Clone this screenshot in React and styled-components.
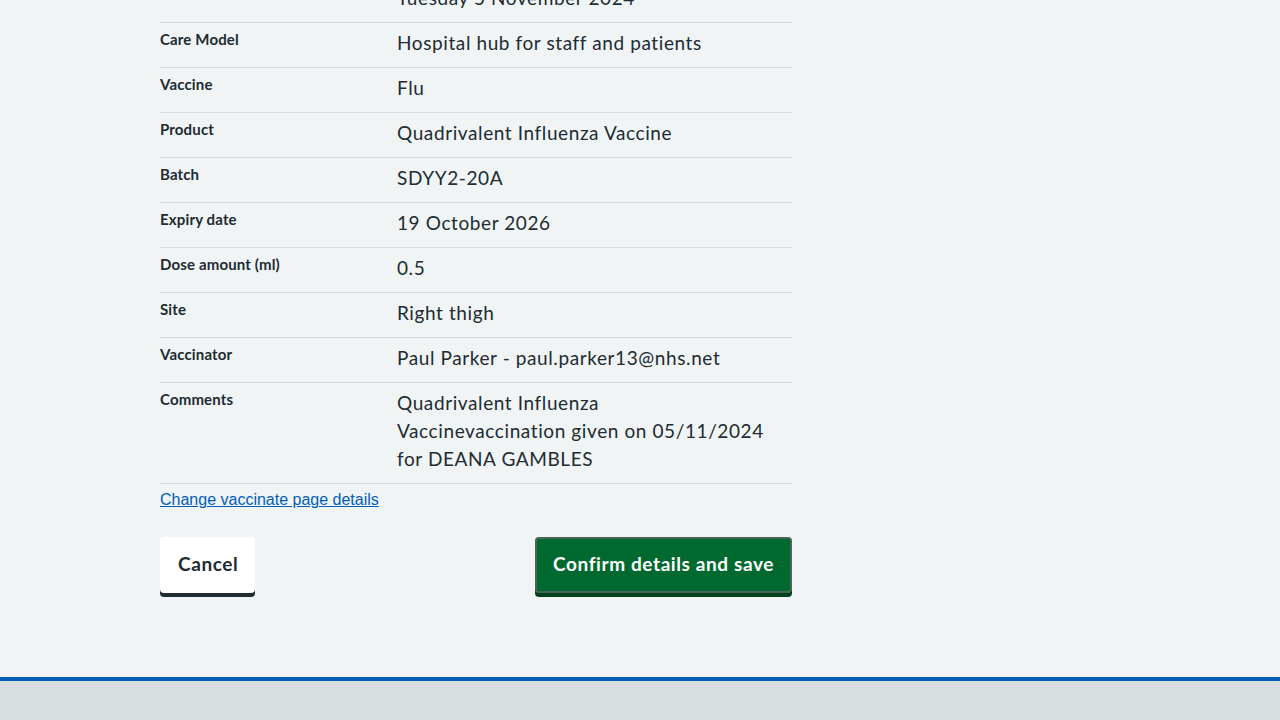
import React from "react";
import styled, { createGlobalStyle } from "styled-components";

const GlobalStyle = createGlobalStyle`
  html, body {
    margin: 0;
    padding: 0;
    background: #f0f4f5;
  }
  body {
    font-family: "Lato", "Noto Sans", sans-serif;
    color: #212b32;
  }
`;

const Page = styled.div`
  overflow: hidden;
`;

const Container = styled.main`
  width: 960px;
  margin: -22px auto 0 auto;
  padding-bottom: 84px;
`;

const Column = styled.div`
  width: 632px;
`;

const SummaryList = styled.dl`
  margin: 0;
`;

const Row = styled.div`
  display: grid;
  grid-template-columns: 237px 1fr;
  border-bottom: 1px solid #d8dde0;
`;

const Key = styled.dt`
  margin: 0;
  padding: 6px 16px 8px 0;
  font-size: 15px;
  line-height: 20px;
  font-weight: 700;
  letter-spacing: 0.15px;
`;

const Value = styled.dd`
  margin: 0;
  padding: 6px 24px 10px 0;
  font-size: 19px;
  line-height: 28px;
  letter-spacing: 0.6px;
`;

const ChangeLink = styled.a`
  display: inline-block;
  margin-top: 7px;
  font-family: "Liberation Sans", Arial, sans-serif;
  font-size: 16px;
  line-height: 18px;
  color: #005eb8;
  text-decoration: underline;
`;

const ButtonRow = styled.div`
  display: flex;
  justify-content: space-between;
  align-items: flex-start;
  margin-top: 28px;
`;

const Button = styled.button`
  font-family: "Lato", "Noto Sans", sans-serif;
  font-size: 19px;
  line-height: 28px;
  font-weight: 700;
  letter-spacing: 0.6px;
  padding: 11px 16px 13px 16px;
  border-radius: 4px;
  cursor: pointer;
  border: 2px solid ${(p) => (p.$primary ? "#4a6455" : "transparent")};
  background: ${(p) => (p.$primary ? "#00692f" : "#ffffff")};
  color: ${(p) => (p.$primary ? "#ffffff" : "#212b32")};
  box-shadow: 0 4px 0 ${(p) => (p.$primary ? "#00401e" : "#212b32")};
`;

const CancelButton = styled(Button)`
  padding-left: 16px;
  padding-right: 15px;
`;

const Footer = styled.footer`
  border-top: 4px solid #005eb8;
  background: #d8dde0;
  height: 120px;
`;

const rows = [
  ["Date", "Tuesday 5 November 2024"],
  ["Care Model", "Hospital hub for staff and patients"],
  ["Vaccine", "Flu"],
  ["Product", "Quadrivalent Influenza Vaccine"],
  ["Batch", "SDYY2-20A"],
  ["Expiry date", "19 October 2026"],
  ["Dose amount (ml)", "0.5"],
  ["Site", "Right thigh"],
  ["Vaccinator", "Paul Parker - paul.parker13@nhs.net"],
  [
    "Comments",
    "Quadrivalent Influenza Vaccinevaccination given on 05/11/2024 for DEANA GAMBLES",
  ],
];

function App() {
  return (
    <Page>
      <GlobalStyle />
      <Container>
        <Column>
          <SummaryList>
            {rows.map(([key, value]) => (
              <Row key={key}>
                <Key>{key}</Key>
                <Value>{value}</Value>
              </Row>
            ))}
          </SummaryList>
          <ChangeLink href="#">Change vaccinate page details</ChangeLink>
          <ButtonRow>
            <CancelButton type="button">Cancel</CancelButton>
            <Button type="button" $primary>
              Confirm details and save
            </Button>
          </ButtonRow>
        </Column>
      </Container>
      <Footer />
    </Page>
  );
}

export default App;
